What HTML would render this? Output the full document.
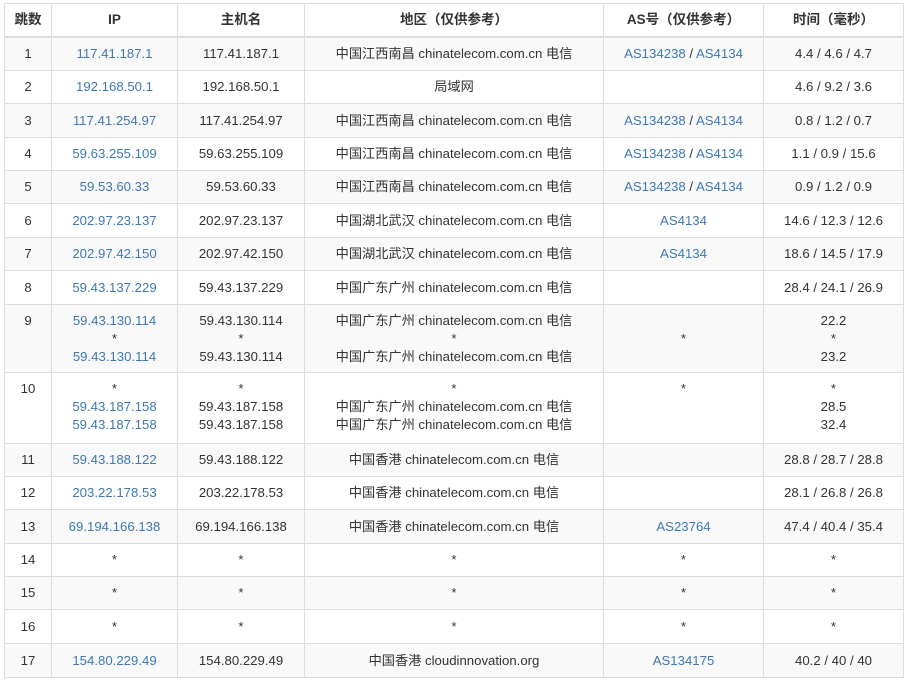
<!DOCTYPE html>
<html><head><meta charset="utf-8"><style>
body{margin:0;background:#fff;font-family:"Liberation Sans","Noto Sans CJK SC",sans-serif;font-size:13.2px;color:#333}
table{position:absolute;left:4px;top:3px;width:899px;border-collapse:collapse;table-layout:fixed}
td,th{border:1px solid #ddd;text-align:center;padding:0 4px;line-height:18px;vertical-align:middle;box-sizing:border-box}
th{font-weight:bold;height:33px;border-bottom:2px solid #ddd;font-size:13.5px}
tr:nth-child(even) td{background:#f9f9f9}
a{color:#3d78b4;text-decoration:none}
td.top{vertical-align:top;padding-top:7px}
</style></head><body>
<table>
<colgroup><col style="width:47px"><col style="width:126px"><col style="width:127px"><col style="width:299px"><col style="width:160px"><col style="width:140px"></colgroup>
<tr><th>跳数</th><th>IP</th><th>主机名</th><th>地区（仅供参考）</th><th>AS号（仅供参考）</th><th>时间（毫秒）</th></tr>
<tr style="height:34px"><td>1</td><td><a>117.41.187.1</a></td><td>117.41.187.1</td><td>中国江西南昌 chinatelecom.com.cn 电信</td><td><a>AS134238</a> / <a>AS4134</a></td><td>4.4 / 4.6 / 4.7</td></tr>
<tr style="height:33px"><td>2</td><td><a>192.168.50.1</a></td><td>192.168.50.1</td><td>局域网</td><td></td><td>4.6 / 9.2 / 3.6</td></tr>
<tr style="height:34px"><td>3</td><td><a>117.41.254.97</a></td><td>117.41.254.97</td><td>中国江西南昌 chinatelecom.com.cn 电信</td><td><a>AS134238</a> / <a>AS4134</a></td><td>0.8 / 1.2 / 0.7</td></tr>
<tr style="height:33px"><td>4</td><td><a>59.63.255.109</a></td><td>59.63.255.109</td><td>中国江西南昌 chinatelecom.com.cn 电信</td><td><a>AS134238</a> / <a>AS4134</a></td><td>1.1 / 0.9 / 15.6</td></tr>
<tr style="height:33px"><td>5</td><td><a>59.53.60.33</a></td><td>59.53.60.33</td><td>中国江西南昌 chinatelecom.com.cn 电信</td><td><a>AS134238</a> / <a>AS4134</a></td><td>0.9 / 1.2 / 0.9</td></tr>
<tr style="height:34px"><td>6</td><td><a>202.97.23.137</a></td><td>202.97.23.137</td><td>中国湖北武汉 chinatelecom.com.cn 电信</td><td><a>AS4134</a></td><td>14.6 / 12.3 / 12.6</td></tr>
<tr style="height:33px"><td>7</td><td><a>202.97.42.150</a></td><td>202.97.42.150</td><td>中国湖北武汉 chinatelecom.com.cn 电信</td><td><a>AS4134</a></td><td>18.6 / 14.5 / 17.9</td></tr>
<tr style="height:34px"><td>8</td><td><a>59.43.137.229</a></td><td>59.43.137.229</td><td>中国广东广州 chinatelecom.com.cn 电信</td><td></td><td>28.4 / 24.1 / 26.9</td></tr>
<tr style="height:68px"><td class="top">9</td><td><a>59.43.130.114</a><br>*<br><a>59.43.130.114</a></td><td>59.43.130.114<br>*<br>59.43.130.114</td><td>中国广东广州 chinatelecom.com.cn 电信<br>*<br>中国广东广州 chinatelecom.com.cn 电信</td><td>*</td><td>22.2<br>*<br>23.2</td></tr>
<tr style="height:71px"><td class="top">10</td><td class="top">*<br><a>59.43.187.158</a><br><a>59.43.187.158</a></td><td class="top">*<br>59.43.187.158<br>59.43.187.158</td><td class="top">*<br>中国广东广州 chinatelecom.com.cn 电信<br>中国广东广州 chinatelecom.com.cn 电信</td><td class="top">*</td><td class="top">*<br>28.5<br>32.4</td></tr>
<tr style="height:33px"><td>11</td><td><a>59.43.188.122</a></td><td>59.43.188.122</td><td>中国香港 chinatelecom.com.cn 电信</td><td></td><td>28.8 / 28.7 / 28.8</td></tr>
<tr style="height:33px"><td>12</td><td><a>203.22.178.53</a></td><td>203.22.178.53</td><td>中国香港 chinatelecom.com.cn 电信</td><td></td><td>28.1 / 26.8 / 26.8</td></tr>
<tr style="height:34px"><td>13</td><td><a>69.194.166.138</a></td><td>69.194.166.138</td><td>中国香港 chinatelecom.com.cn 电信</td><td><a>AS23764</a></td><td>47.4 / 40.4 / 35.4</td></tr>
<tr style="height:33px"><td>14</td><td>*</td><td>*</td><td>*</td><td>*</td><td>*</td></tr>
<tr style="height:33px"><td>15</td><td>*</td><td>*</td><td>*</td><td>*</td><td>*</td></tr>
<tr style="height:34px"><td>16</td><td>*</td><td>*</td><td>*</td><td>*</td><td>*</td></tr>
<tr style="height:34px"><td>17</td><td><a>154.80.229.49</a></td><td>154.80.229.49</td><td>中国香港 cloudinnovation.org</td><td><a>AS134175</a></td><td>40.2 / 40 / 40</td></tr>
</table>
</body></html>
